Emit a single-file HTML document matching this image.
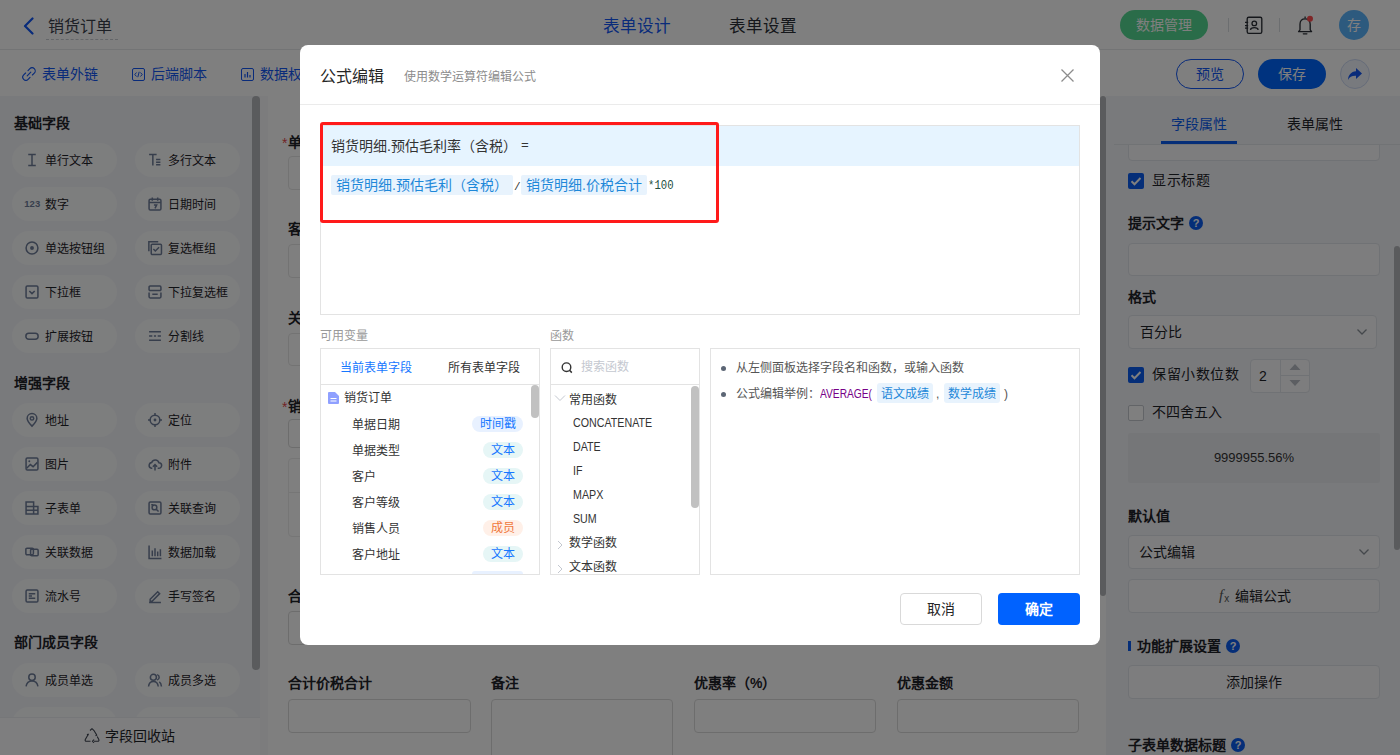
<!DOCTYPE html>
<html lang="zh-CN"><head><meta charset="utf-8">
<style>
*{box-sizing:border-box;margin:0;padding:0}
html,body{width:1400px;height:755px;overflow:hidden;background:#fff}
body{position:relative;font-family:"Liberation Sans",sans-serif;color:#1f2329;font-size:14px}
.a{position:absolute;white-space:nowrap}
svg{display:block}
/* header */
#hdr{left:0;top:0;width:1400px;height:50px;background:#fff;border-bottom:1px solid #e6e8eb}
#tb{left:0;top:50px;width:1400px;height:46px;background:#fff}
#side{left:0;top:96px;width:260px;height:659px;background:#f3f5f9}
#canvas{left:260px;top:96px;width:846px;height:659px;background:#fff}
#rp{left:1106px;top:96px;width:294px;height:659px;background:#f3f5f9}
.pill{position:absolute;width:105px;height:34px;border-radius:17px;background:#fbfcfd}
.pill .ic{position:absolute;left:13px;top:10px;width:14px;height:14px}
.pill .t{position:absolute;left:33px;top:8px;font-size:12px;line-height:20px;color:#1f2329}
.sh{position:absolute;left:14px;font-size:14px;font-weight:bold;line-height:20px;color:#1f2329}
.lbl{position:absolute;font-size:14px;font-weight:bold;line-height:20px;color:#1f2329}
.inp{position:absolute;border:1px solid #dadada;border-radius:4px;background:#fff}
.rinp{position:absolute;border:1px solid #e1e4ea;border-radius:4px;background:#fafbfc}
#ov{left:0;top:0;width:1400px;height:755px;background:rgba(0,0,0,.5)}
#modal{left:300px;top:45px;width:800px;height:600px;background:#fff;border-radius:8px}
</style></head><body>
<!-- HEADER -->
<div id="hdr" class="a"></div>
<svg class="a" style="left:22px;top:17px" width="13" height="18" viewBox="0 0 13 18"><path d="M10.5 1.5 L3 9 L10.5 16.5" fill="none" stroke="#1257f5" stroke-width="2.2" stroke-linecap="round" stroke-linejoin="round"/></svg>
<div class="a" style="left:48px;top:17px;font-size:16px;line-height:20px;color:#3a404a">销货订单</div>
<div class="a" style="left:46px;top:39px;width:72px;height:0;border-top:1px dashed #c8ccd2"></div>
<div class="a" style="left:603px;top:17px;font-size:16.6px;line-height:20px;color:#1257f5">表单设计</div>
<div class="a" style="left:729px;top:17px;font-size:16.6px;line-height:20px;color:#2b2f36">表单设置</div>
<div class="a" style="left:1120px;top:10px;width:88px;height:30px;border-radius:15px;background:#55d892;color:#fff;font-size:14px;line-height:31px;text-align:center">数据管理</div>
<div class="a" style="left:1228px;top:18px;width:1px;height:14px;background:#d9dce1"></div>
<svg class="a" style="left:1244px;top:16px" width="19" height="19" viewBox="0 0 19 19"><rect x="3.2" y="1.2" width="14.6" height="16.2" rx="1.6" fill="none" stroke="#2b2f36" stroke-width="1.35"/><circle cx="10.3" cy="7.4" r="2.3" fill="none" stroke="#2b2f36" stroke-width="1.3"/><path d="M6.4 13.8 C6.8 10.8 13.8 10.8 14.2 13.8" fill="none" stroke="#2b2f36" stroke-width="1.3"/><path d="M1 6.4h3.2M1 9.6h3.2M1 12.2h3.2" stroke="#2b2f36" stroke-width="1.2"/></svg>
<div class="a" style="left:1279px;top:18px;width:1px;height:14px;background:#d9dce1"></div>
<svg class="a" style="left:1296px;top:14px" width="20" height="21" viewBox="0 0 20 21"><path d="M2.6 17.6 H15.6 L14.2 15.8 V10.2 C14.2 6.6 12.2 4.9 9.1 4.9 C6 4.9 4 6.6 4 10.2 V15.8 Z" fill="none" stroke="#2b2f36" stroke-width="1.35" stroke-linejoin="round"/><path d="M9.1 2.6v1.6" stroke="#2b2f36" stroke-width="1.3"/><path d="M7.3 19.8h3.6" stroke="#2b2f36" stroke-width="1.3" stroke-linecap="round"/><circle cx="14" cy="4.8" r="3" fill="#ff4d4f"/></svg>
<div class="a" style="left:1339px;top:10px;width:30px;height:30px;border-radius:15px;background:#5ab4fc;color:#fff;font-size:14px;line-height:31px;text-align:center">存</div>
<div id="tb" class="a"></div>
<svg class="a" style="left:22px;top:67px" width="14" height="14" viewBox="0 0 14 14"><path d="M6 3.6 L7.9 1.7 A2.75 2.75 0 0 1 12.3 6.1 L10.4 8 M8 10.4 L6.1 12.3 A2.75 2.75 0 0 1 1.7 7.9 L3.6 6 M5.2 8.8 L8.8 5.2" fill="none" stroke="#1257f5" stroke-width="1.15" stroke-linecap="round"/></svg>
<div class="a" style="left:42px;top:64px;font-size:14px;line-height:20px;color:#1257f5">表单外链</div>
<svg class="a" style="left:132px;top:68px" width="13" height="13" viewBox="0 0 13 13"><rect x="0.5" y="0.5" width="12" height="12" rx="1.5" fill="none" stroke="#1257f5" stroke-width="1"/><path d="M4.5 4.5 L2.8 6.5 L4.5 8.5 M8.5 4.5 L10.2 6.5 L8.5 8.5 M7.2 3.8 L5.8 9.2" fill="none" stroke="#1257f5" stroke-width="1"/></svg>
<div class="a" style="left:151px;top:64px;font-size:14px;line-height:20px;color:#1257f5">后端脚本</div>
<svg class="a" style="left:241px;top:68px" width="13" height="13" viewBox="0 0 13 13"><rect x="0.5" y="0.5" width="12" height="12" rx="1.5" fill="none" stroke="#1257f5" stroke-width="1"/><path d="M4 6v3.5M6.5 4v5.5M9 7v2.5" stroke="#1257f5" stroke-width="1.2"/></svg>
<div class="a" style="left:260px;top:64px;font-size:14px;line-height:20px;color:#1257f5">数据权限</div>
<div class="a" style="left:1176px;top:59px;width:68px;height:30px;border-radius:15px;border:1px solid #1257f5;color:#1257f5;font-size:14px;line-height:28px;text-align:center">预览</div>
<div class="a" style="left:1258px;top:59px;width:68px;height:30px;border-radius:15px;background:#0066ff;color:#fff;font-size:14px;line-height:30px;text-align:center">保存</div>
<div class="a" style="left:1340px;top:59px;width:30px;height:30px;border-radius:15px;background:#f0f4fc;border:1px solid #cdd9f3"></div>
<svg class="a" style="left:1346px;top:65px" width="18" height="18" viewBox="0 0 18 18"><path d="M10 3 L16 8.5 L10 14 L10 10.8 C6 10.6 3.5 12 2 15 C2.3 10 5 6.8 10 6.3 Z" fill="#1257f5"/></svg>
<div id="side" class="a"></div>
<div class="sh" style="top:113px">基础字段</div>
<div class="pill" style="left:12px;top:143px"><svg class="ic" width="13" height="13" viewBox="0 0 13 13" overflow="visible"><path d="M3 1.5h7M6.5 1.5v10M3 11.5h7" fill="none" stroke="#6e7d99" stroke-width="1.4"/></svg><div class="t">单行文本</div></div>
<div class="pill" style="left:135px;top:143px"><svg class="ic" width="13" height="13" viewBox="0 0 13 13" overflow="visible"><path d="M1 1.5h7M4.5 1.5v10M7.5 6h4M7.5 8.5h4M7.5 11h4" fill="none" stroke="#6e7d99" stroke-width="1.4"/></svg><div class="t">多行文本</div></div>
<div class="pill" style="left:12px;top:187px"><svg class="ic" width="13" height="13" viewBox="0 0 13 13" overflow="visible"><text x="-0.8" y="9.6" font-size="8.8" font-weight="bold" fill="#6e7d99" font-family="Liberation Sans" letter-spacing="0.1">123</text></svg><div class="t">数字</div></div>
<div class="pill" style="left:135px;top:187px"><svg class="ic" width="13" height="13" viewBox="0 0 13 13" overflow="visible"><rect x="1" y="2" width="11" height="10" rx="1.2" fill="none" stroke="#6e7d99" stroke-width="1.4"/><path d="M1 5h11M4 0.5v3M9 0.5v3M5.5 7.5h2.5l-1.5 3" fill="none" stroke="#6e7d99" stroke-width="1.4"/></svg><div class="t">日期时间</div></div>
<div class="pill" style="left:12px;top:231px"><svg class="ic" width="13" height="13" viewBox="0 0 13 13" overflow="visible"><circle cx="6.5" cy="6.5" r="5.5" fill="none" stroke="#6e7d99" stroke-width="1.4"/><circle cx="6.5" cy="6.5" r="1.8" fill="#6e7d99"/></svg><div class="t">单选按钮组</div></div>
<div class="pill" style="left:135px;top:231px"><svg class="ic" width="13" height="13" viewBox="0 0 13 13" overflow="visible"><path d="M0.8 9.5V0.8h8.7" fill="none" stroke="#6e7d99" stroke-width="1.4"/><rect x="3" y="3" width="9.5" height="9.5" rx="1" fill="none" stroke="#6e7d99" stroke-width="1.4"/><path d="M5 7.5l1.8 1.8 3.5-3.5" fill="none" stroke="#6e7d99" stroke-width="1.4"/></svg><div class="t">复选框组</div></div>
<div class="pill" style="left:12px;top:275px"><svg class="ic" width="13" height="13" viewBox="0 0 13 13" overflow="visible"><rect x="1" y="1" width="11" height="11" rx="1.2" fill="none" stroke="#6e7d99" stroke-width="1.4"/><path d="M4 5.5l2.5 2.5 2.5-2.5" fill="none" stroke="#6e7d99" stroke-width="1.4"/></svg><div class="t">下拉框</div></div>
<div class="pill" style="left:135px;top:275px"><svg class="ic" width="13" height="13" viewBox="0 0 13 13" overflow="visible"><path d="M1 5V2a1 1 0 0 1 1-1h9a1 1 0 0 1 1 1v3M1 7v4a1 1 0 0 0 1 1h9a1 1 0 0 0 1-1V7" fill="none" stroke="#6e7d99" stroke-width="1.4"/><path d="M1 5h11M4 8.5h5" fill="none" stroke="#6e7d99" stroke-width="1.4"/></svg><div class="t">下拉复选框</div></div>
<div class="pill" style="left:12px;top:319px"><svg class="ic" width="13" height="13" viewBox="0 0 13 13" overflow="visible"><rect x="0.8" y="4" width="11.4" height="5.5" rx="2.75" fill="none" stroke="#6e7d99" stroke-width="1.4"/></svg><div class="t">扩展按钮</div></div>
<div class="pill" style="left:135px;top:319px"><svg class="ic" width="13" height="13" viewBox="0 0 13 13" overflow="visible"><path d="M1 2.5h11M1 10.5h11M1 6.5h3M5.5 6.5h2M9 6.5h3" fill="none" stroke="#6e7d99" stroke-width="1.4"/></svg><div class="t">分割线</div></div>
<div class="sh" style="top:373px">增强字段</div>
<div class="pill" style="left:12px;top:403px"><svg class="ic" width="13" height="13" viewBox="0 0 13 13" overflow="visible"><path d="M6.5 12.2C3.5 9 2 6.8 2 5a4.5 4.5 0 0 1 9 0c0 1.8-1.5 4-4.5 7.2z" fill="none" stroke="#6e7d99" stroke-width="1.4"/><circle cx="6.5" cy="5" r="1.6" fill="none" stroke="#6e7d99" stroke-width="1.4"/></svg><div class="t">地址</div></div>
<div class="pill" style="left:135px;top:403px"><svg class="ic" width="13" height="13" viewBox="0 0 13 13" overflow="visible"><circle cx="6.5" cy="6.5" r="4.5" fill="none" stroke="#6e7d99" stroke-width="1.4"/><circle cx="6.5" cy="6.5" r="1.3" fill="#6e7d99"/><path d="M6.5 0v2.5M6.5 10.5V13M0 6.5h2.5M10.5 6.5H13" fill="none" stroke="#6e7d99" stroke-width="1.4"/></svg><div class="t">定位</div></div>
<div class="pill" style="left:12px;top:447px"><svg class="ic" width="13" height="13" viewBox="0 0 13 13" overflow="visible"><rect x="1" y="1" width="11" height="11" rx="1.2" fill="none" stroke="#6e7d99" stroke-width="1.4"/><path d="M1.5 10.5l3.5-3.5 2.5 2 4-4" fill="none" stroke="#6e7d99" stroke-width="1.4"/><circle cx="4" cy="4" r="0.9" fill="#6e7d99"/></svg><div class="t">图片</div></div>
<div class="pill" style="left:135px;top:447px"><svg class="ic" width="13" height="13" viewBox="0 0 13 13" overflow="visible"><path d="M4 10.5H3.2A2.8 2.8 0 0 1 3.5 5a3.5 3.5 0 0 1 6.6.3A2.6 2.6 0 0 1 10 10.5H9" fill="none" stroke="#6e7d99" stroke-width="1.4"/><path d="M6.5 12.5V7M4.5 9l2-2 2 2" fill="none" stroke="#6e7d99" stroke-width="1.4"/></svg><div class="t">附件</div></div>
<div class="pill" style="left:12px;top:491px"><svg class="ic" width="13" height="13" viewBox="0 0 13 13" overflow="visible"><path d="M1 1h7v11H1z M8 5h4v7H8 M1 5h7M1 8.5h11" fill="none" stroke="#6e7d99" stroke-width="1.4"/></svg><div class="t">子表单</div></div>
<div class="pill" style="left:135px;top:491px"><svg class="ic" width="13" height="13" viewBox="0 0 13 13" overflow="visible"><rect x="1" y="1" width="11" height="11" rx="1.2" fill="none" stroke="#6e7d99" stroke-width="1.4"/><circle cx="6" cy="6" r="2.2" fill="none" stroke="#6e7d99" stroke-width="1.4"/><path d="M7.6 7.6l2.2 2.2M3 3.5h2" fill="none" stroke="#6e7d99" stroke-width="1.4"/></svg><div class="t">关联查询</div></div>
<div class="pill" style="left:12px;top:535px"><svg class="ic" width="13" height="13" viewBox="0 0 13 13" overflow="visible"><rect x="0.8" y="3" width="7" height="6" rx="1" fill="none" stroke="#6e7d99" stroke-width="1.4"/><rect x="5.2" y="4" width="7" height="6" rx="1" fill="none" stroke="#6e7d99" stroke-width="1.4"/></svg><div class="t">关联数据</div></div>
<div class="pill" style="left:135px;top:535px"><svg class="ic" width="13" height="13" viewBox="0 0 13 13" overflow="visible"><path d="M1 0.5v12h11.5M4 5v5.5M6.5 3v7.5M9 6v4.5M11.5 4v6.5" fill="none" stroke="#6e7d99" stroke-width="1.4"/></svg><div class="t">数据加载</div></div>
<div class="pill" style="left:12px;top:579px"><svg class="ic" width="13" height="13" viewBox="0 0 13 13" overflow="visible"><rect x="1" y="1" width="11" height="11" rx="1.2" fill="none" stroke="#6e7d99" stroke-width="1.4"/><path d="M3.5 4.5h6M3.5 6.5h3M3.5 8.5h6" fill="none" stroke="#6e7d99" stroke-width="1.4"/></svg><div class="t">流水号</div></div>
<div class="pill" style="left:135px;top:579px"><svg class="ic" width="13" height="13" viewBox="0 0 13 13" overflow="visible"><path d="M2 9.5l7-7 1.8 1.8-7 7H2z M1 12.5h11" fill="none" stroke="#6e7d99" stroke-width="1.4"/></svg><div class="t">手写签名</div></div>
<div class="sh" style="top:632px">部门成员字段</div>
<div class="pill" style="left:12px;top:663px"><svg class="ic" width="13" height="13" viewBox="0 0 13 13" overflow="visible"><circle cx="6.5" cy="4" r="3" fill="none" stroke="#6e7d99" stroke-width="1.4"/><path d="M1 12.5c0.5-3.5 3-5 5.5-5s5 1.5 5.5 5" fill="none" stroke="#6e7d99" stroke-width="1.4"/></svg><div class="t">成员单选</div></div>
<div class="pill" style="left:135px;top:663px"><svg class="ic" width="13" height="13" viewBox="0 0 13 13" overflow="visible"><circle cx="5" cy="4" r="2.8" fill="none" stroke="#6e7d99" stroke-width="1.4"/><path d="M0.5 12.5c0.3-3 2-4.7 4.5-4.7s4.2 1.7 4.5 4.7M8.5 1.5a2.6 2.6 0 0 1 0 5M10.5 8.3c1.2 0.8 1.8 2.2 2 4.2" fill="none" stroke="#6e7d99" stroke-width="1.4"/></svg><div class="t">成员多选</div></div>
<div class="pill" style="left:12px;top:707px"><svg class="ic" width="13" height="13" viewBox="0 0 13 13" overflow="visible"><circle cx="6.5" cy="4" r="3" fill="none" stroke="#6e7d99" stroke-width="1.4"/><path d="M1 12.5c0.5-3.5 3-5 5.5-5s5 1.5 5.5 5" fill="none" stroke="#6e7d99" stroke-width="1.4"/></svg><div class="t">部门单选</div></div>
<div class="pill" style="left:135px;top:707px"><svg class="ic" width="13" height="13" viewBox="0 0 13 13" overflow="visible"><circle cx="5" cy="4" r="2.8" fill="none" stroke="#6e7d99" stroke-width="1.4"/><path d="M0.5 12.5c0.3-3 2-4.7 4.5-4.7s4.2 1.7 4.5 4.7M8.5 1.5a2.6 2.6 0 0 1 0 5M10.5 8.3c1.2 0.8 1.8 2.2 2 4.2" fill="none" stroke="#6e7d99" stroke-width="1.4"/></svg><div class="t">部门多选</div></div>
<div class="a" style="left:252px;top:96px;width:8px;height:574px;border-radius:4px;background:#b5b7ba"></div>
<div class="a" style="left:0;top:717px;width:260px;height:38px;background:#fcfdfe;border-top:1px solid #eceef2"></div>
<svg class="a" style="left:84px;top:728px" width="16" height="15" viewBox="0 0 16 15"><path d="M6 2.5l2-1.8 2 1.8 2.5 4.3M13.2 8.5l1.6 3a1.2 1.2 0 0 1-1 1.8H10M6.5 13.3H2.3a1.2 1.2 0 0 1-1-1.8L4 6.8M3 6.3l1 0.7 0.5-1.3M10 11.5l-1.5 1.8 1.5 1.5M12.2 6l0.5 1.2-1.2 0.5" fill="none" stroke="#3d4350" stroke-width="1.1"/></svg>
<div class="a" style="left:105px;top:726px;font-size:14px;line-height:20px;color:#1f2329">字段回收站</div>
<div id="canvas" class="a"></div>
<div class="a" style="left:260px;top:96px;width:8px;height:659px;background:#f8f9fb"></div>
<div class="lbl" style="left:288px;top:132px"><span style="color:#e5484d;font-weight:normal;position:absolute;left:-6px;top:1px">*</span>单据编号</div>
<div class="inp" style="left:288px;top:156px;width:182px;height:34px;border-color:#e6e6e6"></div>
<div class="lbl" style="left:288px;top:219px">客户</div>
<div class="inp" style="left:288px;top:244px;width:182px;height:34px;border-color:#e6e6e6"></div>
<div class="lbl" style="left:288px;top:308px">关联订单</div>
<div class="inp" style="left:288px;top:333px;width:182px;height:33px;border-color:#e6e6e6"></div>
<div class="lbl" style="left:288px;top:396px"><span style="color:#e5484d;font-weight:normal;position:absolute;left:-6px;top:1px">*</span>销货明细</div>
<div class="inp" style="left:288px;top:419px;width:400px;height:29px"></div>
<div class="inp" style="left:288px;top:458px;width:790px;height:79px;border-color:#ececec"></div>
<div class="a" style="left:288px;top:492px;width:790px;height:1px;background:#ececec"></div>
<div class="lbl" style="left:288px;top:586px">合计</div>
<div class="inp" style="left:288px;top:611px;width:182px;height:34px"></div>
<div class="lbl" style="left:288px;top:673px">合计价税合计</div>
<div class="lbl" style="left:491px;top:673px">备注</div>
<div class="lbl" style="left:694px;top:673px">优惠率（%）</div>
<div class="lbl" style="left:897px;top:673px">优惠金额</div>
<div class="inp" style="left:288px;top:699px;width:183px;height:34px"></div>
<div class="inp" style="left:491px;top:699px;width:182px;height:70px"></div>
<div class="inp" style="left:694px;top:699px;width:182px;height:34px"></div>
<div class="inp" style="left:897px;top:699px;width:182px;height:34px"></div>
<div class="a" style="left:1100px;top:96px;width:6px;height:500px;border-radius:3px;background:#b5b7ba"></div>
<div id="rp" class="a"></div>
<div class="rinp" style="left:1128px;top:127px;width:252px;height:34px"></div>
<div class="a" style="left:1106px;top:96px;width:294px;height:49px;background:#f3f5f9"></div>
<div class="a" style="left:1171px;top:114px;font-size:14px;line-height:20px;color:#0a5cf0">字段属性</div>
<div class="a" style="left:1287px;top:114px;font-size:14px;line-height:20px;color:#1f2329">表单属性</div>
<div class="a" style="left:1114px;top:144px;width:286px;height:1px;background:#e3e6eb"></div>
<div class="a" style="left:1161px;top:141px;width:76px;height:3px;background:#0a5cf0"></div>
<div class="a" style="left:1128px;top:173px;width:16px;height:16px;border-radius:2px;background:#0a5cf0"><svg width="16" height="16" viewBox="0 0 16 16"><path d="M3.5 8.2l3 3 6-6.2" fill="none" stroke="#fff" stroke-width="2"/></svg></div>
<div class="a" style="left:1152px;top:170px;font-size:14px;line-height:20px;letter-spacing:0.6px">显示标题</div>
<div class="lbl" style="left:1128px;top:213px">提示文字</div>
<div class="a" style="left:1189px;top:216px;width:14px;height:14px;border-radius:7px;background:#0a5cf0;color:#fff;font-size:11px;line-height:14px;text-align:center;font-weight:bold">?</div>
<div class="rinp" style="left:1128px;top:243px;width:252px;height:33px"></div>
<div class="lbl" style="left:1128px;top:287px">格式</div>
<div class="rinp" style="left:1128px;top:315px;width:249px;height:34px"></div>
<div class="a" style="left:1140px;top:322px;font-size:14px;line-height:20px">百分比</div>
<svg class="a" style="left:1356px;top:328px" width="12" height="8" viewBox="0 0 12 8"><path d="M1.5 1.5l4.5 4.5 4.5-4.5" fill="none" stroke="#8a9099" stroke-width="1.3"/></svg>
<div class="a" style="left:1128px;top:367px;width:16px;height:16px;border-radius:2px;background:#0a5cf0"><svg width="16" height="16" viewBox="0 0 16 16"><path d="M3.5 8.2l3 3 6-6.2" fill="none" stroke="#fff" stroke-width="2"/></svg></div>
<div class="a" style="left:1152px;top:364px;font-size:14px;line-height:20px;letter-spacing:0.5px">保留小数位数</div>
<div class="rinp" style="left:1250px;top:359px;width:60px;height:34px"></div>
<div class="a" style="left:1280px;top:360px;width:1px;height:32px;background:#e1e4ea"></div>
<div class="a" style="left:1281px;top:375px;width:28px;height:1px;background:#e1e4ea"></div>
<svg class="a" style="left:1289px;top:363px" width="12" height="24" viewBox="0 0 12 24"><path d="M0.5 7L6 1l5.5 6z M0.5 17L6 23l5.5-6z" fill="#b8bcc4"/></svg>
<div class="a" style="left:1259px;top:366px;font-size:14px;line-height:20px;font-family:Liberation Sans">2</div>
<div class="a" style="left:1128px;top:405px;width:16px;height:16px;border-radius:2px;border:1px solid #c4c8cf;background:#fff"></div>
<div class="a" style="left:1152px;top:402px;font-size:14px;line-height:20px">不四舍五入</div>
<div class="a" style="left:1128px;top:433px;width:252px;height:50px;background:#ebedf1;border-radius:2px"></div>
<div class="a" style="left:1128px;top:448px;width:252px;text-align:center;font-size:13px;line-height:20px;color:#333">9999955.56%</div>
<div class="lbl" style="left:1128px;top:506px">默认值</div>
<div class="rinp" style="left:1128px;top:535px;width:252px;height:34px"></div>
<div class="a" style="left:1139px;top:542px;font-size:14px;line-height:20px">公式编辑</div>
<svg class="a" style="left:1358px;top:548px" width="12" height="8" viewBox="0 0 12 8"><path d="M1.5 1.5l4.5 4.5 4.5-4.5" fill="none" stroke="#8a9099" stroke-width="1.3"/></svg>
<div class="rinp" style="left:1128px;top:579px;width:252px;height:34px"></div>
<div class="a" style="left:1219px;top:585px;font-size:15px;line-height:20px;font-family:'Liberation Serif';font-style:italic;color:#555">f<span style="font-size:10px;font-style:normal;font-family:'Liberation Sans';position:relative;top:2px;left:1px">x</span></div>
<div class="a" style="left:1235px;top:586px;font-size:14px;line-height:20px">编辑公式</div>
<div class="a" style="left:1128px;top:641px;width:3px;height:10px;background:#0a5cf0"></div>
<div class="lbl" style="left:1137px;top:636px">功能扩展设置</div>
<div class="a" style="left:1226px;top:639px;width:14px;height:14px;border-radius:7px;background:#0a5cf0;color:#fff;font-size:11px;line-height:14px;text-align:center;font-weight:bold">?</div>
<div class="rinp" style="left:1128px;top:665px;width:252px;height:34px"></div>
<div class="a" style="left:1226px;top:672px;font-size:14px;line-height:20px">添加操作</div>
<div class="lbl" style="left:1128px;top:735px">子表单数据标题</div>
<div class="a" style="left:1231px;top:738px;width:14px;height:14px;border-radius:7px;background:#0a5cf0;color:#fff;font-size:11px;line-height:14px;text-align:center;font-weight:bold">?</div>
<div class="a" style="left:1394px;top:246px;width:6px;height:304px;border-radius:3px;background:#b5b7ba"></div>
<!-- OVERLAY -->
<div id="ov" class="a"></div>
<!-- MODAL -->
<div id="modal" class="a"></div>
<div class="a" style="left:320px;top:67px;font-size:16px;line-height:20px;color:#262626">公式编辑</div>
<div class="a" style="left:404px;top:67px;font-size:12px;line-height:20px;color:#8c8c8c">使用数学运算符编辑公式</div>
<svg class="a" style="left:1060px;top:68px" width="15" height="15" viewBox="0 0 15 15"><path d="M1.5 1.5l12 12M13.5 1.5l-12 12" stroke="#8c8c8c" stroke-width="1.3"/></svg>
<div class="a" style="left:300px;top:104px;width:800px;height:1px;background:#ebebeb"></div>
<div class="a" style="left:320px;top:125px;width:760px;height:190px;border:1px solid #e3e3e3"></div>
<div class="a" style="left:321px;top:126px;width:758px;height:40px;background:#e6f4ff"></div>
<div class="a" style="left:331px;top:136px;font-size:14px;line-height:20px;color:#333">销货明细.预估毛利率（含税）</div>
<div class="a" style="left:521px;top:136px;font-size:13px;line-height:20px;color:#333;font-family:Liberation Mono">=</div>
<div class="a" style="left:331px;top:175px;width:182px;height:20px;background:#e8f3fd;border-radius:2px"></div>
<div class="a" style="left:336px;top:175px;font-size:14px;line-height:20px;color:#1e88d9">销货明细.预估毛利（含税）</div>
<div class="a" style="left:514px;top:177px;font-size:11px;line-height:20px;color:#333;font-family:Liberation Mono">/</div>
<div class="a" style="left:521px;top:175px;width:126px;height:20px;background:#e8f3fd;border-radius:2px"></div>
<div class="a" style="left:526px;top:175px;font-size:14px;line-height:20px;color:#1e88d9">销货明细.价税合计</div>
<div class="a" style="left:648px;top:176px;font-size:12.5px;line-height:20px;color:#24503f;font-family:Liberation Mono;transform:scaleX(0.85);transform-origin:0 0">*100</div>
<div class="a" style="left:320px;top:122px;width:399px;height:101px;border:3px solid #ff1a1a;border-radius:3px"></div>
<div class="a" style="left:320px;top:326px;font-size:12px;line-height:20px;color:#999">可用变量</div>
<div class="a" style="left:550px;top:326px;font-size:12px;line-height:20px;color:#999">函数</div>
<div class="a" style="left:320px;top:348px;width:220px;height:227px;border:1px solid #e3e3e3"></div>
<div class="a" style="left:340px;top:358px;font-size:12px;line-height:20px;color:#1677ff">当前表单字段</div>
<div class="a" style="left:448px;top:358px;font-size:12px;line-height:20px;color:#333">所有表单字段</div>
<div class="a" style="left:321px;top:384px;width:218px;height:1px;background:#e3e3e3"></div>
<svg class="a" style="left:328px;top:392px" width="11" height="12" viewBox="0 0 11 12"><path d="M0 1a1 1 0 0 1 1-1h6l4 4v7a1 1 0 0 1-1 1H1a1 1 0 0 1-1-1z" fill="#8fa0ff"/><path d="M2.5 6.5h6M2.5 9h6" stroke="#fff" stroke-width="1.1"/></svg>
<div class="a" style="left:344px;top:388px;font-size:12px;line-height:20px;color:#333">销货订单</div>
<div class="a" style="left:352px;top:415px;font-size:12px;line-height:20px;color:#333">单据日期</div>
<div class="a" style="left:472px;top:416px;width:51px;height:16px;border-radius:8px;background:#e8f1ff;color:#1677ff;font-size:12px;line-height:16px;text-align:center">时间戳</div>
<div class="a" style="left:352px;top:441px;font-size:12px;line-height:20px;color:#333">单据类型</div>
<div class="a" style="left:483px;top:442px;width:40px;height:16px;border-radius:8px;background:#e6f6f6;color:#1677ff;font-size:12px;line-height:16px;text-align:center">文本</div>
<div class="a" style="left:352px;top:467px;font-size:12px;line-height:20px;color:#333">客户</div>
<div class="a" style="left:483px;top:468px;width:40px;height:16px;border-radius:8px;background:#e6f6f6;color:#1677ff;font-size:12px;line-height:16px;text-align:center">文本</div>
<div class="a" style="left:352px;top:493px;font-size:12px;line-height:20px;color:#333">客户等级</div>
<div class="a" style="left:483px;top:494px;width:40px;height:16px;border-radius:8px;background:#e6f6f6;color:#1677ff;font-size:12px;line-height:16px;text-align:center">文本</div>
<div class="a" style="left:352px;top:519px;font-size:12px;line-height:20px;color:#333">销售人员</div>
<div class="a" style="left:483px;top:520px;width:40px;height:16px;border-radius:8px;background:#fff0e8;color:#f0783c;font-size:12px;line-height:16px;text-align:center">成员</div>
<div class="a" style="left:352px;top:545px;font-size:12px;line-height:20px;color:#333">客户地址</div>
<div class="a" style="left:483px;top:546px;width:40px;height:16px;border-radius:8px;background:#e6f6f6;color:#1677ff;font-size:12px;line-height:16px;text-align:center">文本</div>
<div class="a" style="left:472px;top:571px;width:51px;height:3px;border-radius:8px 8px 0 0;background:#e8f1ff"></div>
<div class="a" style="left:531px;top:385px;width:8px;height:33px;border-radius:4px;background:#c1c1c1"></div>
<div class="a" style="left:550px;top:348px;width:150px;height:227px;border:1px solid #e3e3e3"></div>
<svg class="a" style="left:561px;top:362px" width="13" height="12" viewBox="0 0 13 12"><circle cx="5.5" cy="5.2" r="4.3" fill="none" stroke="#333" stroke-width="1.4"/><path d="M8.5 8.3l2.3 2.3" stroke="#333" stroke-width="1.5"/></svg>
<div class="a" style="left:581px;top:357px;font-size:12px;line-height:20px;color:#c4c8d0">搜索函数</div>
<div class="a" style="left:551px;top:384px;width:148px;height:1px;background:#e3e3e3"></div>
<svg class="a" style="left:554px;top:394px" width="12" height="8" viewBox="0 0 12 8"><path d="M1 1.5l5 5 5-5" fill="none" stroke="#c4c8d0" stroke-width="1"/></svg>
<div class="a" style="left:569px;top:390px;font-size:12px;line-height:20px;color:#333">常用函数</div>
<div class="a" style="left:573px;top:413px;font-size:12px;line-height:20px;color:#333;transform:scaleX(0.89);transform-origin:0 0">CONCATENATE</div>
<div class="a" style="left:573px;top:437px;font-size:12px;line-height:20px;color:#333;transform:scaleX(0.89);transform-origin:0 0">DATE</div>
<div class="a" style="left:573px;top:461px;font-size:12px;line-height:20px;color:#333;transform:scaleX(0.89);transform-origin:0 0">IF</div>
<div class="a" style="left:573px;top:485px;font-size:12px;line-height:20px;color:#333;transform:scaleX(0.89);transform-origin:0 0">MAPX</div>
<div class="a" style="left:573px;top:509px;font-size:12px;line-height:20px;color:#333;transform:scaleX(0.89);transform-origin:0 0">SUM</div>
<svg class="a" style="left:557px;top:540px" width="6" height="10" viewBox="0 0 6 10"><path d="M1 1l4 4-4 4" fill="none" stroke="#c4c8d0" stroke-width="1"/></svg>
<div class="a" style="left:569px;top:533px;font-size:12px;line-height:20px;color:#333">数学函数</div>
<svg class="a" style="left:557px;top:564px" width="6" height="10" viewBox="0 0 6 10"><path d="M1 1l4 4-4 4" fill="none" stroke="#c4c8d0" stroke-width="1"/></svg>
<div class="a" style="left:569px;top:557px;font-size:12px;line-height:20px;color:#333">文本函数</div>
<div class="a" style="left:551px;top:574px;width:148px;height:1px;background:#e3e3e3"></div>
<div class="a" style="left:691px;top:386px;width:8px;height:122px;border-radius:4px;background:#c1c1c1"></div>
<div class="a" style="left:710px;top:348px;width:370px;height:227px;border:1px solid #e3e3e3"></div>
<div class="a" style="left:721px;top:366px;width:5px;height:5px;border-radius:3px;background:#5c6675"></div>
<div class="a" style="left:736px;top:358px;font-size:12px;line-height:20px;color:#555">从左侧面板选择字段名和函数，或输入函数</div>
<div class="a" style="left:721px;top:392px;width:5px;height:5px;border-radius:3px;background:#5c6675"></div>
<div class="a" style="left:736px;top:384px;font-size:12px;line-height:20px;color:#555">公式编辑举例：</div>
<div class="a" style="left:820px;top:384px;font-size:12px;line-height:20px;color:#770088;transform:scaleX(0.85);transform-origin:0 0">AVERAGE(</div>
<div class="a" style="left:877px;top:383px;width:56px;height:20px;border-radius:3px;background:#e8f3fd"></div>
<div class="a" style="left:881px;top:384px;font-size:12px;line-height:20px;color:#1e88d9">语文成绩</div>
<div class="a" style="left:936px;top:384px;font-size:12px;line-height:20px;color:#555">,</div>
<div class="a" style="left:944px;top:383px;width:56px;height:20px;border-radius:3px;background:#e8f3fd"></div>
<div class="a" style="left:948px;top:384px;font-size:12px;line-height:20px;color:#1e88d9">数学成绩</div>
<div class="a" style="left:1004px;top:384px;font-size:12px;line-height:20px;color:#555">)</div>
<div class="a" style="left:900px;top:593px;width:82px;height:32px;border:1px solid #d9d9d9;border-radius:4px;font-size:14px;line-height:30px;text-align:center;color:#262626">取消</div>
<div class="a" style="left:998px;top:593px;width:82px;height:32px;border-radius:4px;background:#0062ff;font-size:14px;line-height:32px;text-align:center;color:#fff;font-weight:bold">确定</div>
</body></html>
